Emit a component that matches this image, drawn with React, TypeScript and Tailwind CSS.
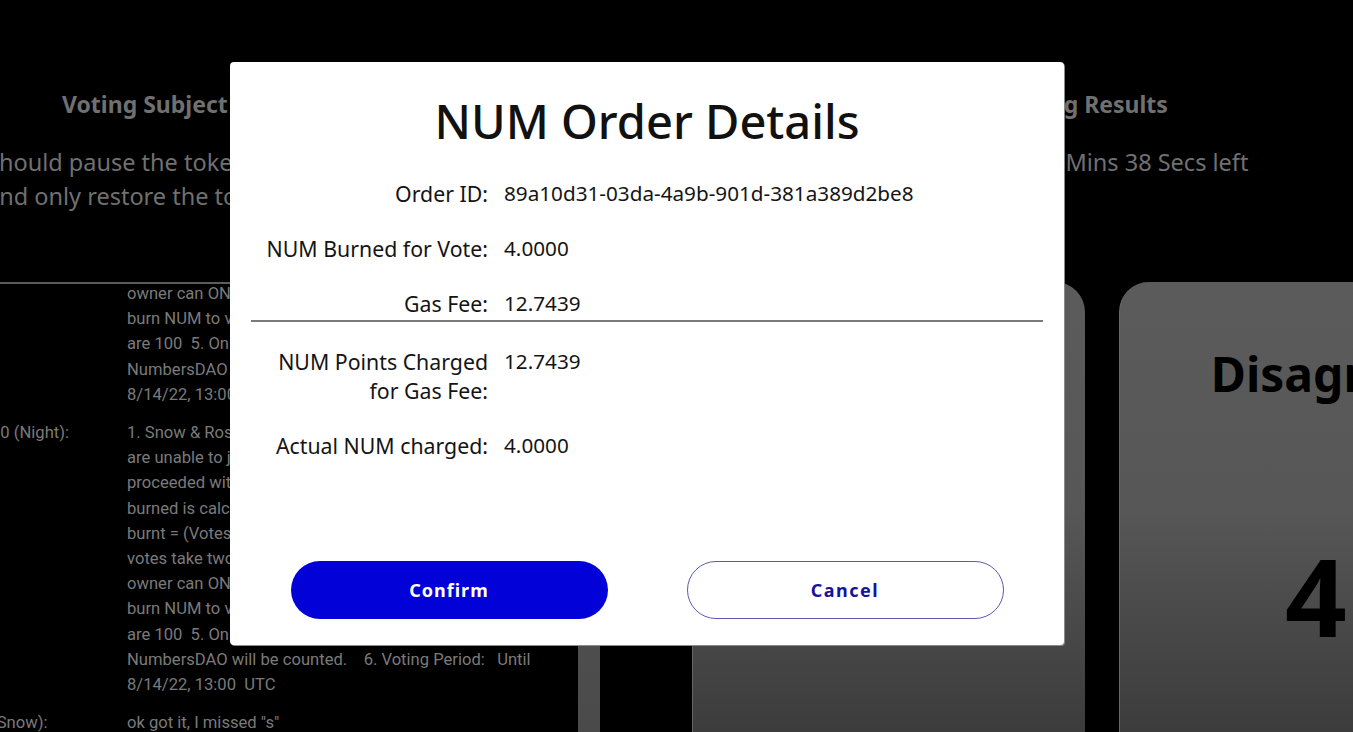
import React from 'react'

const subjectLines = [
  'Should pause the token swap until the voting has finished',
  'and only restore the token swap once the result is known',
]

interface Message {
  author: string
  lines: string[]
}

const messages: Message[] = [
  {
    author: '',
    lines: [
      'owner can ONLY vote once.  4. Users need to',
      'burn NUM to vote. Maximum votes per user',
      'are 100  5. Only votes of NFT holders of',
      'NumbersDAO will be counted.    6. Voting Period:   Until',
      '8/14/22, 13:00  UTC',
    ],
  },
  {
    author: '10 (Night):',
    lines: [
      '1. Snow & Rose holders who',
      'are unable to join the vote',
      'proceeded with the swap.  2. NUM',
      'burned is calculated as: NUM',
      'burnt = (Votes x Votes)  3. The',
      'votes take two days. Each NFT',
      'owner can ONLY vote once.  4. Users need to',
      'burn NUM to vote. Maximum votes per user',
      'are 100  5. Only votes of NFT holders of',
      'NumbersDAO will be counted.    6. Voting Period:   Until',
      '8/14/22, 13:00  UTC',
    ],
  },
  {
    author: '(Snow):',
    lines: ['ok got it, I missed "s"'],
  },
]

interface DetailRow {
  label: string[]
  value: string
}

const topRows: DetailRow[] = [
  { label: ['Order ID:'], value: '89a10d31-03da-4a9b-901d-381a389d2be8' },
  { label: ['NUM Burned for Vote:'], value: '4.0000' },
  { label: ['Gas Fee:'], value: '12.7439' },
]

const bottomRows: DetailRow[] = [
  { label: ['NUM Points Charged', 'for Gas Fee:'], value: '12.7439' },
  { label: ['Actual NUM charged:'], value: '4.0000' },
]

const Row = ({ row }: { row: DetailRow }) => (
  <div className="flex gap-[16px] leading-[29px] text-[#141414]">
    <div className="w-[237px] shrink-0 text-right text-[21.3px]">
      {row.label.map((l) => (
        <div key={l}>{l}</div>
      ))}
    </div>
    <div className="text-[20.7px]">{row.value}</div>
  </div>
)

const ResultCard = ({ title, count }: { title: string; count: number }) => (
  <div className="flex w-[393px] shrink-0 flex-col items-center rounded-t-[30px] border-l border-[#666] bg-gradient-to-b from-[#5b5b5b] via-[#575757] to-[#3c3c3c]">
    <div className="mt-[64px] text-[48px] font-bold leading-[56px] text-black">{title}</div>
    <div className="mt-[139px] text-[108px] font-bold leading-[110px] text-black">{count}</div>
  </div>
)

export default function App() {
  return (
    <div
      className="relative flex h-[732px] w-full overflow-hidden bg-black"
      style={{ fontFamily: '"Noto Sans", "Open Sans", sans-serif' }}
    >
      {/* left: subject and discussion thread */}
      <div className="flex w-[600px] shrink-0 flex-col">
        <div className="pl-[62px] pt-[89px] text-[23px] font-bold leading-[30px] text-[#707070]">
          Voting Subject
        </div>
        <div className="-ml-[14px] mt-[26px] whitespace-pre text-[23.5px] leading-[34px] text-[#707070]">
          {subjectLines.map((l) => (
            <div key={l}>{l}</div>
          ))}
        </div>
        <div className="mt-[69px] h-[2px] w-[578px] bg-[#5c5c5c]" />
        <div className="flex min-h-0 flex-1">
          <div
            className="min-h-0 w-[578px] overflow-hidden text-[16.6px] leading-[25.2px] text-[#7a7a7a]"
            style={{ fontFamily: 'Roboto, "Liberation Sans", sans-serif' }}
          >
            <div className="-mt-[3px] flex flex-col gap-[13px]">
              {messages.map((m, i) => (
                <div key={i} className="flex">
                  <div className="-ml-[9px] w-[136px] shrink-0 whitespace-pre">{m.author}</div>
                  <div className="whitespace-pre">
                    {m.lines.map((l, j) => (
                      <div key={j}>{l}</div>
                    ))}
                  </div>
                </div>
              ))}
            </div>
          </div>
          <div className="mt-[60px] w-[22px] bg-gradient-to-b from-[#5a5a5a] to-[#4a4a4a]" />
        </div>
      </div>

      {/* right: results */}
      <div className="flex min-w-0 flex-1 flex-col pl-[92px]">
        <div className="pl-[311px] pt-[89px] text-[23px] font-bold leading-[30px] text-[#707070]">
          Voting Results
        </div>
        <div className="mt-[26px] whitespace-pre pl-[155px] text-[23.5px] leading-[34px] text-[#707070]">
          1 Days 23 Hours 12 Mins 38 Secs left
        </div>
        <div className="mt-[103px] flex min-h-0 flex-1 gap-[34px]">
          <ResultCard title="Agree" count={0} />
          <ResultCard title="Disagree" count={4} />
        </div>
      </div>

      {/* order confirmation dialog */}
      <div className="absolute left-[230px] top-[62px] flex h-[583px] w-[834px] flex-col rounded-[4px] bg-white shadow-[1px_1px_0_#8a8a8a]">
        <h1 className="pt-[31px] text-center text-[47px] font-medium leading-[56px] text-[#111]">
          NUM Order Details
        </h1>
        <div className="mt-[30px] flex flex-col gap-[26px] px-[21px]">
          {topRows.map((r) => (
            <Row key={r.value + r.label[0]} row={r} />
          ))}
        </div>
        <div className="mx-[21px] mt-[2px] h-[2px] bg-[#7a7a7a]" />
        <div className="mt-[25px] flex flex-col gap-[26px] px-[21px]">
          {bottomRows.map((r) => (
            <Row key={r.label[0]} row={r} />
          ))}
        </div>
        <div className="mt-auto flex justify-center gap-[79px] pb-[26px]">
          <button className="h-[58px] w-[317px] rounded-full bg-[#0202d8] text-[18px] font-bold tracking-[1px] text-white">
            Confirm
          </button>
          <button className="h-[58px] w-[317px] rounded-full border-[1.5px] border-[#5a5ab0] bg-white text-[18px] font-bold tracking-[1.5px] text-[#14149a]">
            Cancel
          </button>
        </div>
      </div>
    </div>
  )
}
